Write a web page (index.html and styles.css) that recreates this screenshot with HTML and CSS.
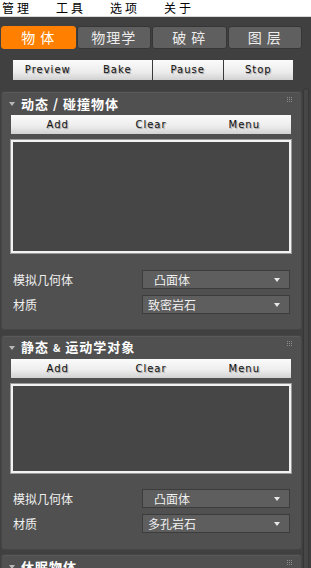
FILE: index.html
```html
<!DOCTYPE html>
<html>
<head>
<meta charset="utf-8">
<link rel="stylesheet" href="styles.css">
</head>
<body>
<div class="menubar">
  <span class="mi">管理</span><span class="mi">工具</span><span class="mi">选项</span><span class="mi">关于</span>
</div>
<div class="main">
  <div class="content">
    <div class="tabs">
      <div class="tab active">物 体</div>
      <div class="tab">物理学</div>
      <div class="tab">破 碎</div>
      <div class="tab">图 层</div>
    </div>
    <div class="toolbar">
      <div class="btn">Preview</div>
      <div class="btn">Bake</div>
      <div class="btn sep">Pause</div>
      <div class="btn sep">Stop</div>
    </div>

    <div class="panel">
      <div class="phead"><span class="tri"></span><span class="ptitle">动态 / 碰撞物体</span><svg class="grip" width="5" height="5" viewBox="0 0 5 5"><g fill="#8c8c8c"><rect x="0" y="0" width="1" height="1"/><rect x="2" y="0" width="1" height="1"/><rect x="4" y="0" width="1" height="1"/><rect x="0" y="2" width="1" height="1"/><rect x="2" y="2" width="1" height="1"/><rect x="4" y="2" width="1" height="1"/><rect x="0" y="4" width="1" height="1"/><rect x="2" y="4" width="1" height="1"/><rect x="4" y="4" width="1" height="1"/></g></svg></div>
      <div class="addbar"><div class="abtn">Add</div><div class="abtn">Clear</div><div class="abtn">Menu</div></div>
      <div class="list list1"></div>
      <div class="row first"><span class="lbl">模拟几何体</span><div class="dd"><span class="ddt indent">凸面体</span><span class="arr"></span></div></div>
      <div class="row"><span class="lbl">材质</span><div class="dd"><span class="ddt">致密岩石</span><span class="arr"></span></div></div>
    </div>

    <div class="panel p2">
      <div class="phead"><span class="tri"></span><span class="ptitle">静态 <span class="amp">&amp;</span> 运动学对象</span><svg class="grip" width="5" height="5" viewBox="0 0 5 5"><g fill="#8c8c8c"><rect x="0" y="0" width="1" height="1"/><rect x="2" y="0" width="1" height="1"/><rect x="4" y="0" width="1" height="1"/><rect x="0" y="2" width="1" height="1"/><rect x="2" y="2" width="1" height="1"/><rect x="4" y="2" width="1" height="1"/><rect x="0" y="4" width="1" height="1"/><rect x="2" y="4" width="1" height="1"/><rect x="4" y="4" width="1" height="1"/></g></svg></div>
      <div class="addbar"><div class="abtn">Add</div><div class="abtn">Clear</div><div class="abtn">Menu</div></div>
      <div class="list list2"></div>
      <div class="row first2"><span class="lbl">模拟几何体</span><div class="dd"><span class="ddt indent">凸面体</span><span class="arr"></span></div></div>
      <div class="row"><span class="lbl">材质</span><div class="dd"><span class="ddt">多孔岩石</span><span class="arr"></span></div></div>
    </div>

    <div class="panel p3">
      <div class="phead"><span class="tri"></span><span class="ptitle">休眠物体</span><svg class="grip" width="5" height="5" viewBox="0 0 5 5"><g fill="#8c8c8c"><rect x="0" y="0" width="1" height="1"/><rect x="2" y="0" width="1" height="1"/><rect x="4" y="0" width="1" height="1"/><rect x="0" y="2" width="1" height="1"/><rect x="2" y="2" width="1" height="1"/><rect x="4" y="2" width="1" height="1"/><rect x="0" y="4" width="1" height="1"/><rect x="2" y="4" width="1" height="1"/><rect x="4" y="4" width="1" height="1"/></g></svg></div>
    </div>
  </div>
  <div class="scroll"><div class="track"></div></div>
</div>
</body>
</html>
```
FILE: styles.css
```css
html, body {
  margin: 0;
  padding: 0;
  background: #404040;
  height: 568px;
  overflow: hidden;
  font-family: "Noto Sans CJK SC", "DejaVu Sans", sans-serif;
}
.menubar {
  height: 17px;
  background: #ffffff;
  border-bottom: 1px solid #d8d8d8;
  box-sizing: border-box;
  display: flex;
  gap: 24px;
  padding-left: 2px;
  align-items: center;
}
.mi {
  font-size: 12px;
  letter-spacing: 3px;
  color: #000;
  line-height: 16px;
  width: 30px;
}
.main {
  display: flex;
}
.content {
  width: 302px;
  padding-top: 9px;
}
.tabs {
  display: flex;
  gap: 1px;
  margin-left: 1px;
}
.tab {
  width: 76px;
  height: 23px;
  box-sizing: border-box;
  background: #5f5f5f;
  border: 1px solid #363636;
  border-radius: 3px;
  color: #ececec;
  font-size: 14px;
  line-height: 21px;
  text-align: center;
  letter-spacing: 1px;
}
.tab.active {
  background: #ff7f00;
  border-color: #ff7f00;
  color: #fff;
}
.toolbar {
  display: flex;
  margin: 11px 0 0 13px;
  width: 280px;
  height: 20px;
}
.btn, .abtn {
  flex: 1;
  background: linear-gradient(#fbfbfb, #ececec 60%, #d2d2d2);
  color: #111;
  font-family: "DejaVu Sans", sans-serif;
  font-size: 10px;
  letter-spacing: 1px;
  text-align: center;
  line-height: 20px;
  text-shadow: 1px 1px 1px rgba(0,0,0,0.35);
}
.btn.sep {
  border-left: 1px solid #3a3a3a;
}
.panel {
  margin: 11px 0 0 1px;
  width: 301px;
  height: 239px;
  box-sizing: border-box;
  background: #505050;
  border: 1px solid #454545;
  border-radius: 3px;
  box-shadow: inset 0 1px 0 #595959;
}
.panel.p2 {
  margin-top: 5px;
  height: 215px;
}
.panel.p3 {
  margin-top: 4px;
  height: 40px;
}
.phead {
  height: 23px;
  display: flex;
  align-items: center;
  position: relative;
}
.tri {
  width: 0;
  height: 0;
  border-left: 3px solid transparent;
  border-right: 3px solid transparent;
  border-top: 4px solid #b8b8b8;
  margin: 0 6px 0 7px;
}
.ptitle {
  color: #fff;
  font-weight: bold;
  font-size: 13px;
  letter-spacing: 1px;
  line-height: 16px;
}
.amp {
  font-size: 10px;
}
.grip {
  position: absolute;
  right: 9px;
  top: 5px;
}
.addbar {
  display: flex;
  margin-left: 9px;
  width: 280px;
  height: 19px;
}
.abtn {
  line-height: 19px;
  font-size: 10px;
}
.list {
  margin: 6px 0 0 9px;
  width: 280px;
  box-sizing: border-box;
  background: #464646;
  border: 2px solid #f2f2f2;
  box-shadow: 0 0 0 1px #9a9a9a;
}
.list1 { height: 113px; }
.list2 { height: 89px; }
.row {
  display: flex;
  align-items: center;
  margin-top: 6px;
  height: 19px;
}
.row.first { margin-top: 17px; }
.row.first2 { margin-top: 16px; }
.lbl {
  width: 129px;
  padding-left: 11px;
  color: #f0f0f0;
  font-size: 12px;
  line-height: 16px;
}
.dd {
  width: 148px;
  height: 19px;
  box-sizing: border-box;
  background: #5e5e5e;
  border: 1px solid #3c3c3c;
  display: flex;
  align-items: center;
  justify-content: space-between;
  padding: 0 9px 0 5px;
}
.ddt {
  color: #f0f0f0;
  font-size: 12px;
  line-height: 16px;
}
.ddt.indent {
  padding-left: 6px;
}
.arr {
  width: 0;
  height: 0;
  border-left: 3px solid transparent;
  border-right: 3px solid transparent;
  border-top: 4px solid #e8e8e8;
}
.scroll {
  width: 9px;
  padding-top: 71px;
  padding-left: 1px;
}
.track {
  width: 6px;
  height: 500px;
  box-sizing: border-box;
  background: #474747;
  border: 1px solid #363636;
  border-radius: 3px;
}
```
